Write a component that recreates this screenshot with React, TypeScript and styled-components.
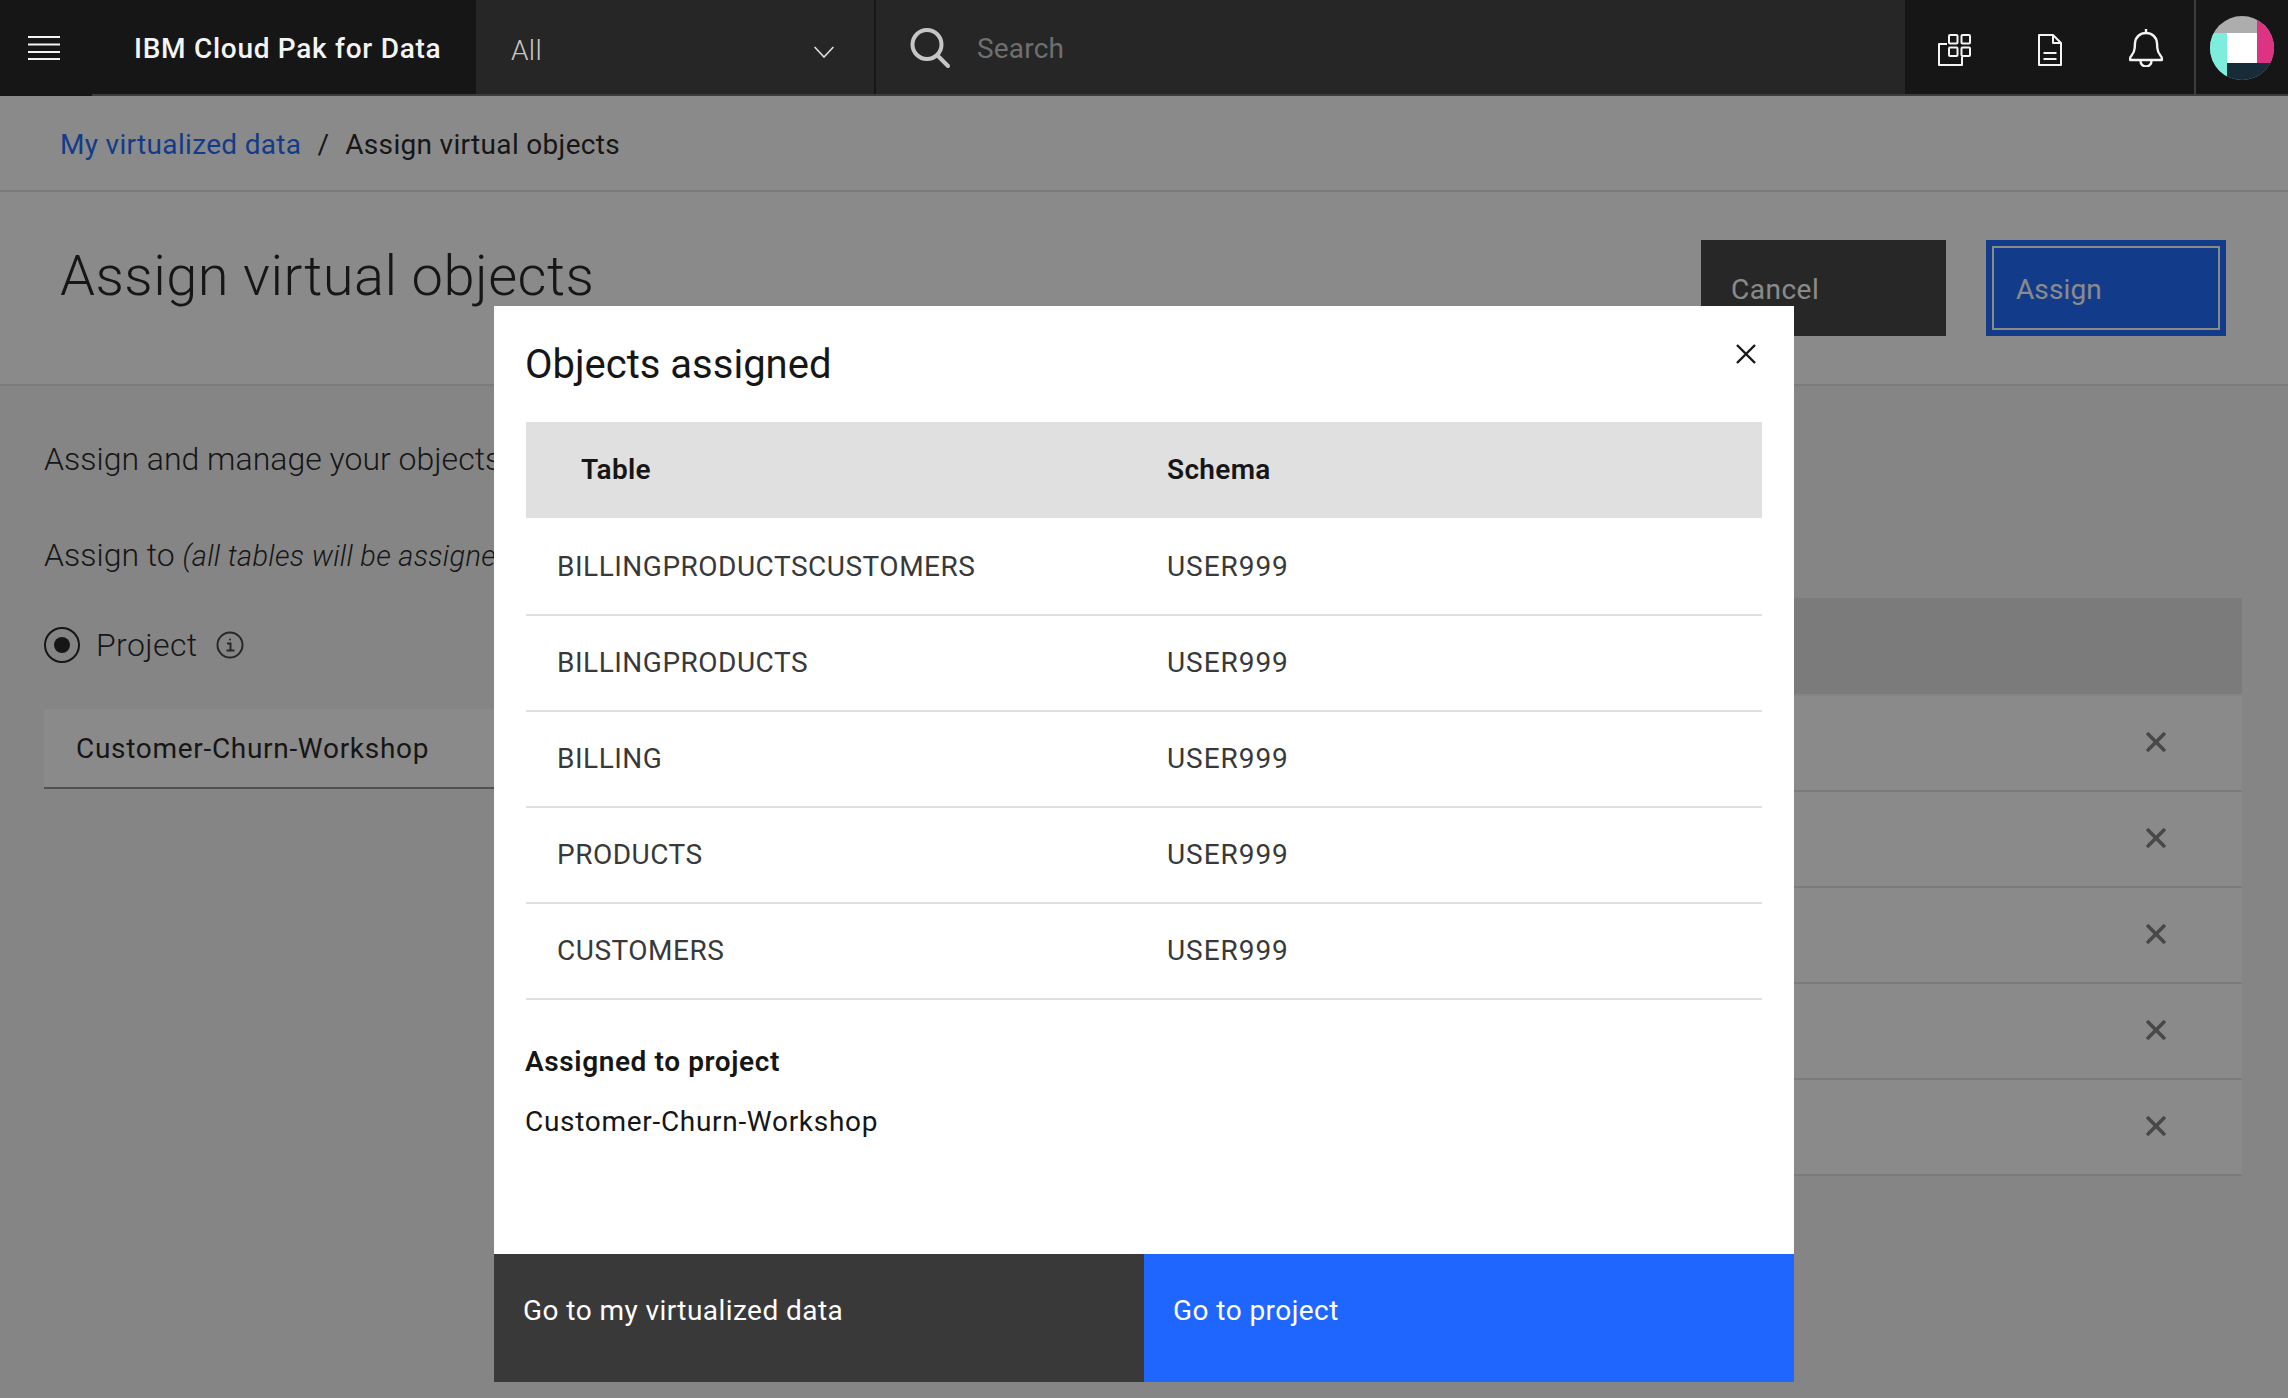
import styled, { createGlobalStyle } from "styled-components";

const FONT = `"Roboto", "Noto Sans", "Liberation Sans", sans-serif`;

const GlobalStyle = createGlobalStyle`
  html, body {
    margin: 0;
    padding: 0;
    background: #f4f4f4;
  }
  * {
    box-sizing: border-box;
  }
  #root {
    font-family: ${FONT};
    color: #161616;
  }
`;

const Page = styled.div`
  position: relative;
  width: 2288px;
  height: 1398px;
  overflow: hidden;
  display: flex;
  flex-direction: column;
`;

// --- TOP BAR ---
const TopBar = styled.header`
  position: relative;
  z-index: 20;
  flex: 0 0 96px;
  display: flex;
  background: #161616;
  &::after {
    content: "";
    position: absolute;
    left: 92px;
    right: 0;
    bottom: 0;
    height: 2px;
    background: #3d3d3d;
  }
`;

const MenuButton = styled.div`
  flex: 0 0 92px;
  padding-left: 28px;
  display: flex;
  align-items: center;
`;

const BrandName = styled.div`
  flex: 0 0 384px;
  padding: 2px 0 0 42px;
  line-height: 94px;
  font-size: 28px;
  font-weight: 500;
  letter-spacing: 0.72px;
  color: #f4f4f4;
`;

const ScopeSelect = styled.div`
  flex: 0 0 400px;
  display: flex;
  align-items: center;
  justify-content: space-between;
  padding: 4px 40px 0 35px;
  background: #262626;
  border-right: 2px solid #161616;
  font-size: 28px;
  font-weight: 300;
  letter-spacing: 0.3px;
  color: #c6c6c6;
  svg {
    margin-top: 4px;
  }
`;

const SearchBox = styled.div`
  flex: 1;
  display: flex;
  align-items: center;
  gap: 24px;
  padding-left: 33px;
  background: #262626;
  font-size: 28px;
  letter-spacing: 0.2px;
  color: #6f6f6f;
`;

const ActionGroup = styled.div`
  flex: 0 0 289px;
  display: flex;
  align-items: flex-end;
  gap: 67px;
  padding: 0 0 29px 33px;
`;

const AvatarCell = styled.div`
  flex: 0 0 94px;
  display: flex;
  align-items: center;
  justify-content: center;
  border-left: 2px solid #3d3d3d;
`;

// --- PAGE HEADERS ---
const BreadcrumbRow = styled.nav`
  flex: 0 0 96px;
  display: flex;
  align-items: center;
  gap: 16px;
  padding: 3px 60px 0;
  background: #fff;
  border-bottom: 2px solid #e0e0e0;
  font-size: 28px;
  letter-spacing: 0.32px;
`;

const BreadcrumbLink = styled.span`
  color: #0f62fe;
`;

const TitleRow = styled.div`
  flex: 0 0 194px;
  display: flex;
  align-items: flex-start;
  justify-content: space-between;
  padding: 48px 62px 0 60px;
  background: #fff;
  border-bottom: 2px solid #e0e0e0;
`;

const PageTitle = styled.h1`
  margin: 0;
  font-size: 56px;
  line-height: 72px;
  font-weight: 300;
  letter-spacing: 0.46px;
`;

const TitleActions = styled.div`
  display: flex;
  gap: 40px;
`;

const PageButton = styled.div<{ $primary?: boolean }>`
  width: ${(p) => (p.$primary ? "240px" : "245px")};
  height: 96px;
  display: flex;
  align-items: center;
  padding: 2px 30px 0;
  font-size: 28px;
  letter-spacing: ${(p) => (p.$primary ? "0.1px" : "0.5px")};
  color: #fff;
  background: ${(p) => (p.$primary ? "#0f62fe" : "#393939")};
  outline: ${(p) => (p.$primary ? "2px solid #fff" : "none")};
  outline-offset: -8px;
`;

// --- PAGE CONTENT ---
const Content = styled.main`
  flex: 1;
  display: flex;
  justify-content: space-between;
  padding: 0 46px 0 44px;
  background: #f4f4f4;
`;

const AssignColumn = styled.section`
  flex: 0 0 800px;
  padding-top: 54px;
`;

const Lead = styled.p`
  margin: 0 0 58px;
  font-size: 32px;
  line-height: 38px;
  font-weight: 300;
`;

const Hint = styled.em`
  font-size: 29px;
  font-weight: 300;
  letter-spacing: 0.3px;
`;

const RadioRow = styled.div`
  display: flex;
  align-items: center;
  height: 40px;
  margin-top: -8px;
  font-size: 32px;
  font-weight: 300;
  letter-spacing: 0.4px;
`;

const Radio = styled.span`
  flex: 0 0 36px;
  height: 36px;
  margin-right: 16px;
  border: 2px solid #161616;
  border-radius: 50%;
  display: flex;
  align-items: center;
  justify-content: center;
  &::before {
    content: "";
    width: 16px;
    height: 16px;
    border-radius: 50%;
    background: #161616;
  }
`;

const InfoIcon = styled.svg`
  margin-left: 18px;
`;

const ProjectInput = styled.div`
  width: 760px;
  height: 80px;
  margin-top: 44px;
  padding-left: 32px;
  line-height: 80px;
  background: #fff;
  border-bottom: 2px solid #8d8d8d;
  font-size: 28px;
  letter-spacing: 0.7px;
`;

const ObjectsColumn = styled.section`
  flex: 0 0 1242px;
  padding-top: 212px;
`;

const ObjectsHead = styled.div`
  height: 96px;
  margin-bottom: 2px;
  background: #e0e0e0;
`;

const ObjectsRow = styled.div`
  height: 96px;
  display: flex;
  align-items: center;
  justify-content: flex-end;
  padding: 0 76px 2px 0;
  background: #fff;
  border-bottom: 2px solid #e0e0e0;
`;

// --- MODAL ---
const Overlay = styled.div`
  position: absolute;
  z-index: 10;
  inset: 96px 0 0 0;
  display: flex;
  justify-content: center;
  padding-top: 210px;
  background: rgba(22, 22, 22, 0.5);
`;

const Modal = styled.div`
  position: relative;
  width: 1300px;
  height: 1076px;
  display: flex;
  flex-direction: column;
  background: #fff;
`;

const ModalTitle = styled.h2`
  margin: 0;
  padding: 31px 32px 0 31px;
  height: 116px;
  font-size: 40px;
  line-height: 56px;
  font-weight: 400;
`;

const CloseButton = styled.svg`
  position: absolute;
  top: 38px;
  right: 38px;
`;

const TableWrap = styled.div`
  margin: 0 32px;
`;

const TableBody = styled.div`
  padding-top: 2px;
`;

const TableRow = styled.div<{ $head?: boolean }>`
  height: 96px;
  display: grid;
  grid-template-columns: 641px 1fr;
  align-items: center;
  padding-bottom: 2px;
  font-size: 28px;
  letter-spacing: ${(p) => (p.$head ? "0.32px" : "0.5px")};
  font-weight: ${(p) => (p.$head ? 600 : 400)};
  color: ${(p) => (p.$head ? "#161616" : "#393939")};
  background: ${(p) => (p.$head ? "#e0e0e0" : "#fff")};
  border-bottom: ${(p) => (p.$head ? "none" : "2px solid #e0e0e0")};
`;

const NameCell = styled.div<{ $head?: boolean }>`
  padding-left: ${(p) => (p.$head ? "55px" : "31px")};
`;

const SchemaCell = styled.div`
  letter-spacing: 0.95px;
`;

const AssignedLabel = styled.div`
  margin: 44px 32px 0 31px;
  font-size: 28px;
  line-height: 36px;
  font-weight: 600;
  letter-spacing: 0.6px;
`;

const AssignedValue = styled.div`
  margin: 24px 32px 0 31px;
  font-size: 28px;
  line-height: 36px;
  letter-spacing: 0.7px;
`;

const ModalFooter = styled.div`
  margin-top: auto;
  height: 128px;
  display: flex;
`;

const FooterButton = styled.div<{ $primary?: boolean }>`
  flex: 1;
  padding: 39px 29px 0;
  font-size: 28px;
  line-height: 36px;
  letter-spacing: 0.44px;
  color: #fff;
  background: ${(p) => (p.$primary ? "#1f66ff" : "#393939")};
`;

// --- ICONS ---
const MenuIcon = () => (
  <svg width="32" height="26" viewBox="0 0 32 26" fill="#f4f4f4">
    <rect y="1" width="32" height="2" />
    <rect y="8.5" width="32" height="2" />
    <rect y="16" width="32" height="2" />
    <rect y="23" width="32" height="2" />
  </svg>
);

const Chevron = () => (
  <svg width="20" height="12" viewBox="0 0 20 12" fill="none" stroke="#e0e0e0" strokeWidth="1.6">
    <path d="M.6 1l9.4 10L19.4 1" />
  </svg>
);

const SearchIcon = () => (
  <svg width="44" height="48" viewBox="0 0 44 48" fill="none" stroke="#c6c6c6" strokeWidth="4" strokeLinecap="round">
    <circle cx="18" cy="20.5" r="14.5" />
    <path d="M29 32l10 10" />
  </svg>
);

const AppsIcon = () => (
  <svg width="33" height="33" viewBox="0 0 33 33" fill="none" stroke="#f4f4f4" strokeWidth="2" strokeLinejoin="round">
    <path d="M9 10H1v21h23v-8" />
    <rect x="11" y="1" width="8.5" height="8.5" rx="1" />
    <rect x="23.5" y="1" width="8.5" height="8.5" rx="1" />
    <rect x="11" y="13.5" width="8.5" height="8.5" rx="1" />
    <rect x="23.5" y="13.5" width="8.5" height="8.5" rx="1" />
  </svg>
);

const DocIcon = () => (
  <svg width="24" height="33" viewBox="0 0 24 33" fill="none" stroke="#f4f4f4" strokeWidth="2" strokeLinejoin="round">
    <path d="M1 1h14l8 8v22H1z" />
    <path d="M15 1v8h8" />
    <path d="M5.5 19h13M5.5 25h13" />
  </svg>
);

const BellIcon = () => (
  <svg width="34" height="38" viewBox="0 0 34 38" fill="none" stroke="#f4f4f4" strokeWidth="2.4" strokeLinejoin="round">
    <path d="M17 0v4" />
    <path d="M1.2 31v-2c0-1 .5-1.5 1-2 2-2.5 3.3-4 3.5-8l.3-5C6.500 8 11 4 17 4s10.500 4 11 10l.3 5c.2 4 1.500 5.500 3.500 8 .5.5 1 1 1 2v2z" />
    <path d="M11.500 32a5.500 5.500 0 0 0 11 0" />
  </svg>
);

const Avatar = () => (
  <svg width="64" height="64" viewBox="0 0 64 64">
    <defs>
      <clipPath id="avatar-clip">
        <circle cx="32" cy="32" r="32" />
      </clipPath>
    </defs>
    <g clipPath="url(#avatar-clip)">
      <rect width="64" height="64" fill="#adadad" />
      <rect y="17" width="17" height="47" fill="#7deedc" />
      <rect x="47" width="17" height="47" fill="#dc3382" />
      <rect x="17" y="47" width="47" height="17" fill="#182b38" />
      <rect x="17" y="17" width="30" height="30" fill="#fff" />
    </g>
  </svg>
);

const InfoGlyph = () => (
  <InfoIcon width="28" height="28" viewBox="0 0 28 28" fill="none" stroke="#393939" strokeWidth="2">
    <circle cx="14" cy="14" r="12.5" />
    <path d="M11 12.500h3.500v7M10.500 19.500h8" />
    <circle cx="14" cy="8.500" r="1" fill="#393939" stroke="none" />
  </InfoIcon>
);

const RemoveIcon = () => (
  <svg width="20" height="20" viewBox="0 0 20 20" stroke="#7a7a7a" strokeWidth="3.6" fill="none">
    <path d="M1 1l18 18M19 1L1 19" />
  </svg>
);

const CloseIcon = () => (
  <CloseButton width="20" height="20" viewBox="0 0 20 20" stroke="#161616" strokeWidth="2.4" fill="none">
    <path d="M1 1l18 18M19 1L1 19" />
  </CloseButton>
);

const tables = ["BILLINGPRODUCTSCUSTOMERS", "BILLINGPRODUCTS", "BILLING", "PRODUCTS", "CUSTOMERS"];

const App = () => (
  <Page>
    <GlobalStyle />
    <TopBar>
      <MenuButton>
        <MenuIcon />
      </MenuButton>
      <BrandName>IBM Cloud Pak for Data</BrandName>
      <ScopeSelect>
        All
        <Chevron />
      </ScopeSelect>
      <SearchBox>
        <SearchIcon />
        Search
      </SearchBox>
      <ActionGroup>
        <AppsIcon />
        <DocIcon />
        <BellIcon />
      </ActionGroup>
      <AvatarCell>
        <Avatar />
      </AvatarCell>
    </TopBar>

    <BreadcrumbRow>
      <BreadcrumbLink>My virtualized data</BreadcrumbLink>
      <span>/</span>
      <span>Assign virtual objects</span>
    </BreadcrumbRow>

    <TitleRow>
      <PageTitle>Assign virtual objects</PageTitle>
      <TitleActions>
        <PageButton>Cancel</PageButton>
        <PageButton $primary>Assign</PageButton>
      </TitleActions>
    </TitleRow>

    <Content>
      <AssignColumn>
        <Lead>Assign and manage your objects</Lead>
        <Lead>
          Assign to <Hint>(all tables will be assigned)</Hint>
        </Lead>
        <RadioRow>
          <Radio />
          Project
          <InfoGlyph />
        </RadioRow>
        <ProjectInput>Customer-Churn-Workshop</ProjectInput>
      </AssignColumn>
      <ObjectsColumn>
        <ObjectsHead />
        {tables.map((name) => (
          <ObjectsRow key={name}>
            <RemoveIcon />
          </ObjectsRow>
        ))}
      </ObjectsColumn>
    </Content>

    <Overlay>
      <Modal>
        <ModalTitle>Objects assigned</ModalTitle>
        <CloseIcon />
        <TableWrap>
          <TableRow $head>
            <NameCell $head>Table</NameCell>
            <div>Schema</div>
          </TableRow>
          <TableBody>
            {tables.map((name) => (
              <TableRow key={name}>
                <NameCell>{name}</NameCell>
                <SchemaCell>USER999</SchemaCell>
              </TableRow>
            ))}
          </TableBody>
        </TableWrap>
        <AssignedLabel>Assigned to project</AssignedLabel>
        <AssignedValue>Customer-Churn-Workshop</AssignedValue>
        <ModalFooter>
          <FooterButton>Go to my virtualized data</FooterButton>
          <FooterButton $primary>Go to project</FooterButton>
        </ModalFooter>
      </Modal>
    </Overlay>
  </Page>
);

export default App;
